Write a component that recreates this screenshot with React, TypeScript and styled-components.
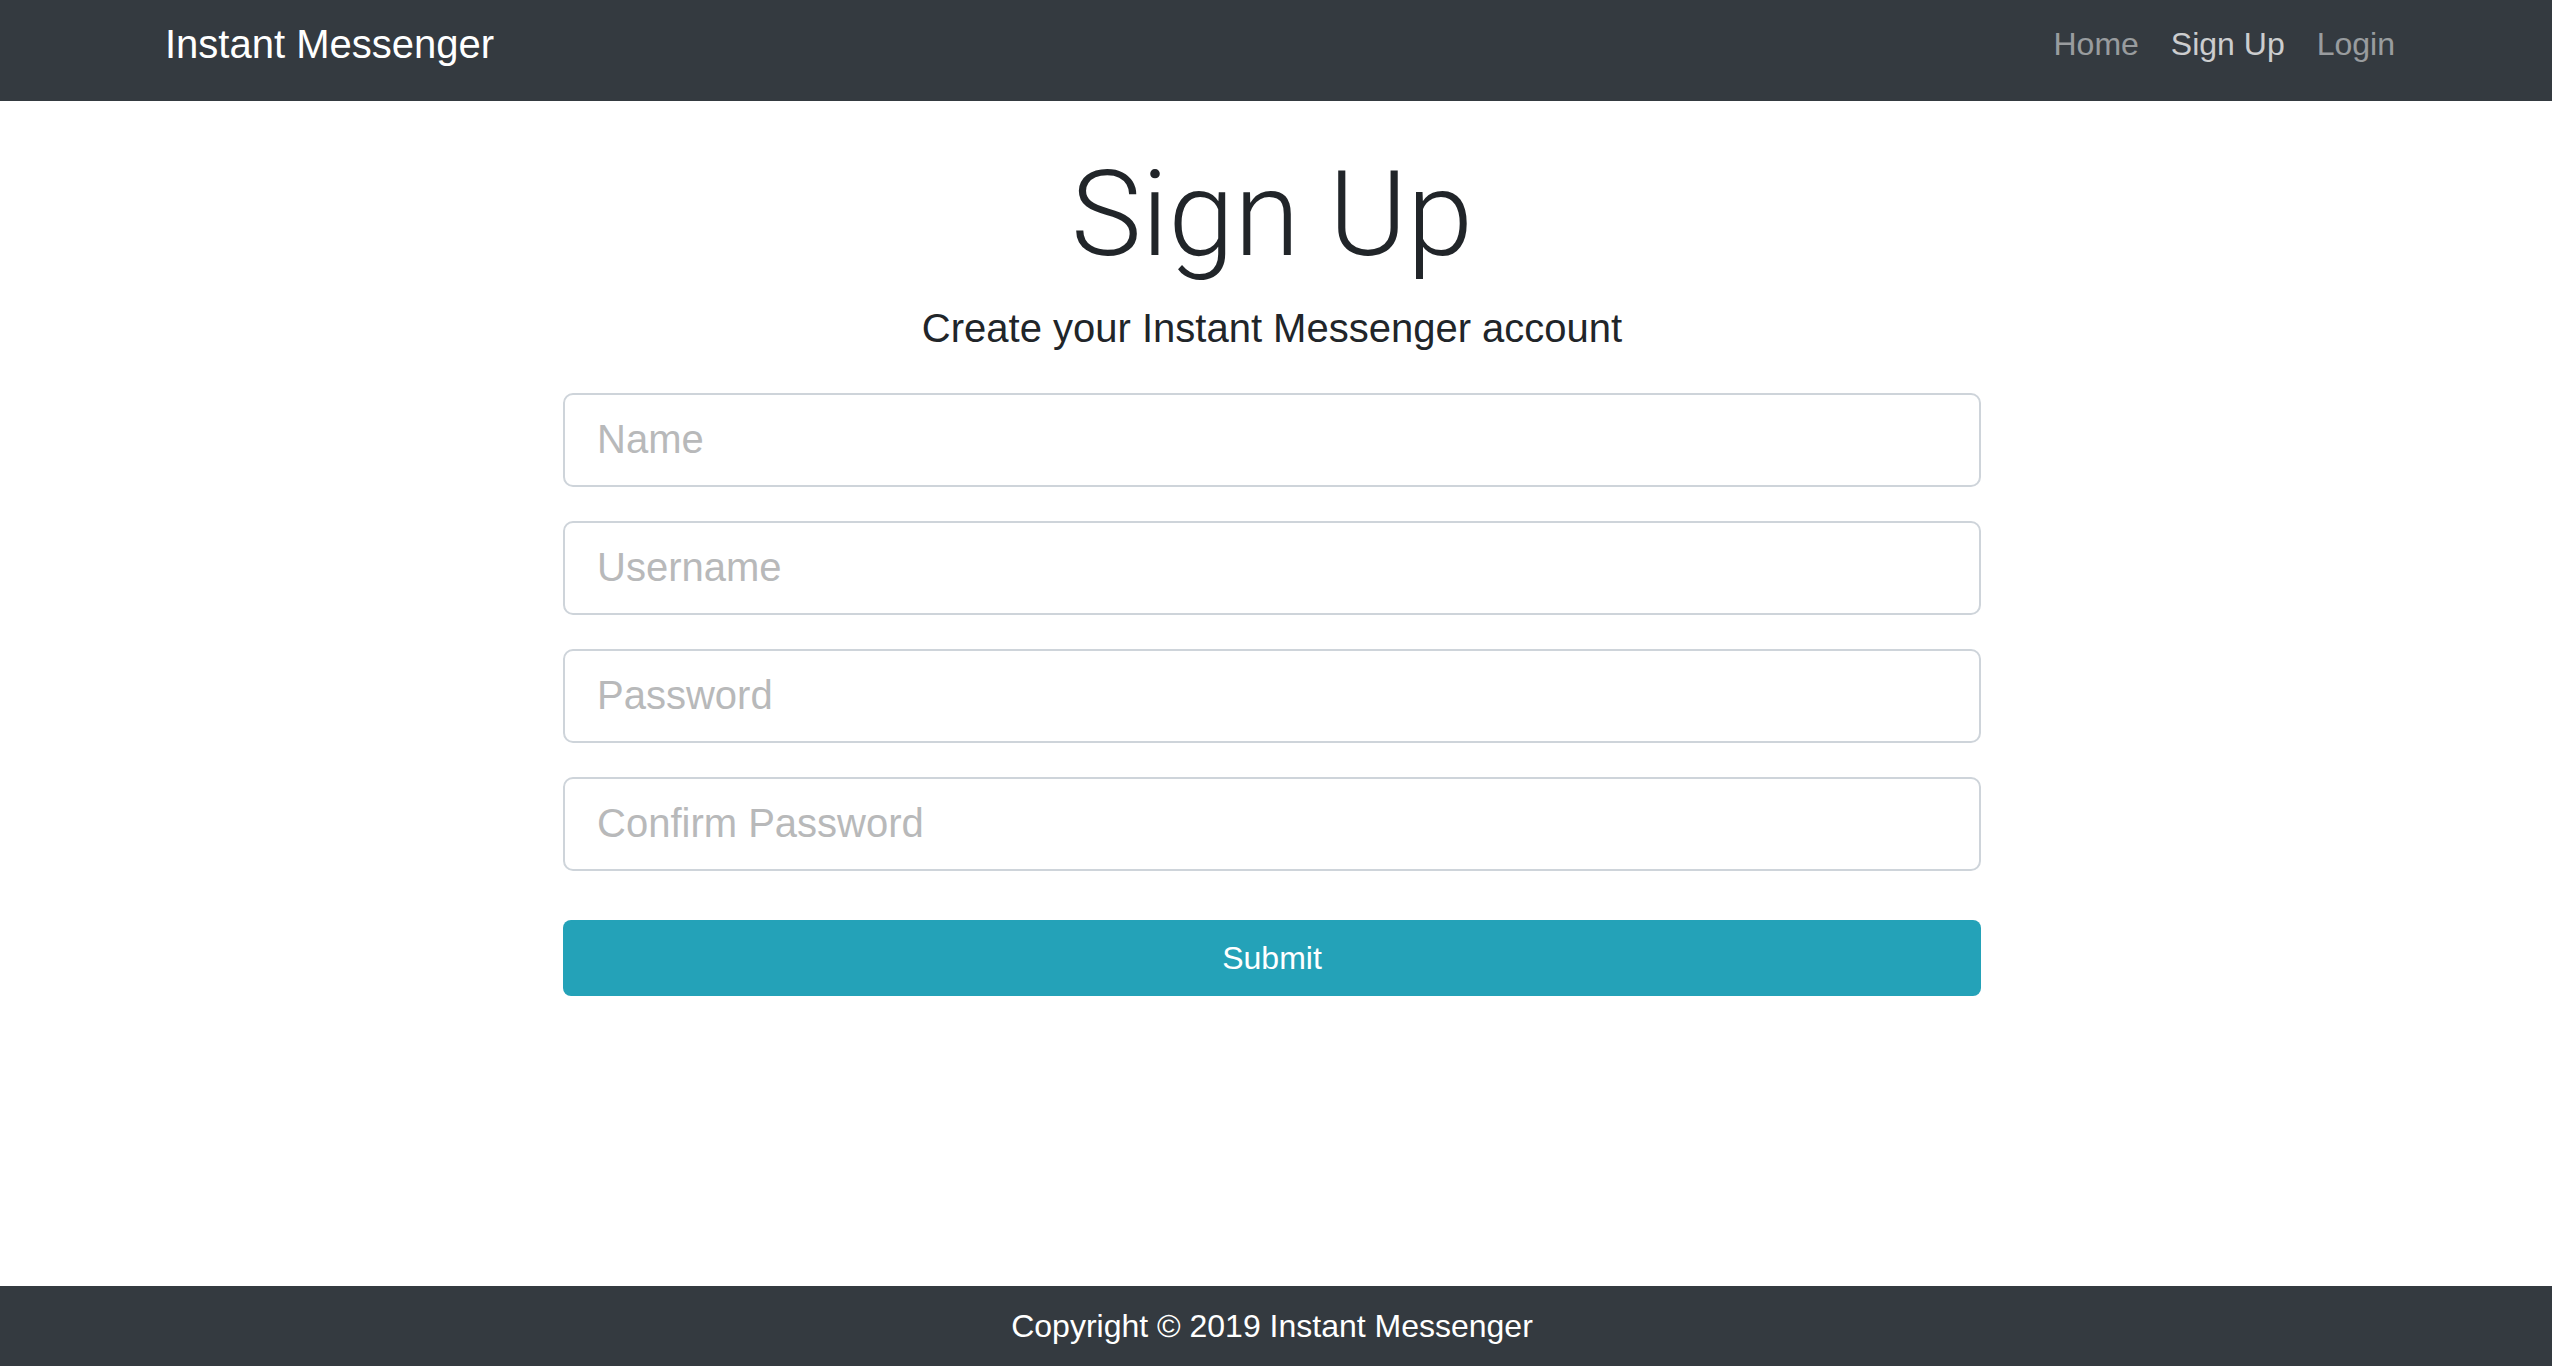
import styled, { createGlobalStyle } from 'styled-components';

const GlobalStyle = createGlobalStyle`
  html, body {
    margin: 0;
    padding: 0;
    background: #ffffff;
  }
  body {
    font-family: 'Liberation Sans', Arial, sans-serif;
    color: #212529;
  }
  * {
    box-sizing: border-box;
  }
`;

const fields = [
  { name: 'name', type: 'text', placeholder: 'Name' },
  { name: 'username', type: 'text', placeholder: 'Username' },
  { name: 'password', type: 'password', placeholder: 'Password' },
  { name: 'confirm', type: 'password', placeholder: 'Confirm Password' },
];

const navLinks = [
  { label: 'Home', active: false },
  { label: 'Sign Up', active: true },
  { label: 'Login', active: false },
];

export default function App() {
  return (
    <>
      <GlobalStyle />
      <Page>
        <Navbar>
          <Brand href='#'>Instant Messenger</Brand>
          <NavList>
            {navLinks.map((link) => (
              <NavLink key={link.label} href='#' $active={link.active}>
                {link.label}
              </NavLink>
            ))}
          </NavList>
        </Navbar>

        <Main>
          <Title>Sign Up</Title>
          <Lead>Create your Instant Messenger account</Lead>
          <Form onSubmit={(e) => e.preventDefault()}>
            {fields.map((f) => (
              <Input
                key={f.name}
                name={f.name}
                type={f.type}
                placeholder={f.placeholder}
              />
            ))}
            <SubmitButton type='submit'>Submit</SubmitButton>
          </Form>
        </Main>

        <Footer>Copyright © 2019 Instant Messenger</Footer>
      </Page>
    </>
  );
}

const Page = styled.div`
  display: flex;
  flex-direction: column;
  min-height: 100vh;
`;

const Navbar = styled.nav`
  display: flex;
  align-items: center;
  justify-content: space-between;
  height: 101px;
  padding: 0 141px 0 165px;
  background: #343a40;
`;

const Brand = styled.a`
  font-size: 40px;
  line-height: 60px;
  color: #ffffff;
  text-decoration: none;
  margin-top: -14px;
`;

const NavList = styled.div`
  display: flex;
  align-items: center;
  margin-top: -14px;
`;

const NavLink = styled.a<{ $active?: boolean }>`
  font-size: 32px;
  line-height: 48px;
  padding: 0 16px;
  color: ${({ $active }) =>
    $active ? 'rgba(255, 255, 255, 0.75)' : 'rgba(255, 255, 255, 0.5)'};
  text-decoration: none;
`;

const Main = styled.main`
  flex: 1;
  display: flex;
  flex-direction: column;
  align-items: center;
  padding: 43px 8px 0 0;
`;

const Title = styled.h1`
  font-family: Roboto, 'Liberation Sans', sans-serif;
  font-weight: 300;
  font-size: 119px;
  line-height: 1.2;
  margin: 0;
  color: #212529;
`;

const Lead = styled.p`
  font-size: 40px;
  line-height: 60px;
  margin: 11px 0 35px;
  color: #212529;
`;

const Form = styled.form`
  display: flex;
  flex-direction: column;
  gap: 34px;
  width: 1418px;
`;

const Input = styled.input`
  display: block;
  width: 100%;
  height: 94px;
  padding: 16px 32px;
  font-family: 'Liberation Sans', Arial, sans-serif;
  font-size: 40px;
  line-height: 60px;
  color: #495057;
  background: #ffffff;
  border: 2px solid #ced4da;
  border-radius: 10px;
  outline: none;

  &::placeholder {
    color: #b8b9ba;
  }
`;

const SubmitButton = styled.button`
  margin-top: 15px;
  width: 100%;
  height: 76px;
  font-family: 'Liberation Sans', Arial, sans-serif;
  font-size: 32px;
  line-height: 48px;
  color: #ffffff;
  background: #24a2b8;
  border: none;
  border-radius: 8px;
  cursor: pointer;
`;

const Footer = styled.footer`
  display: flex;
  align-items: center;
  justify-content: center;
  height: 80px;
  padding-right: 8px;
  background: #343a40;
  color: #ffffff;
  font-size: 32px;
`;
